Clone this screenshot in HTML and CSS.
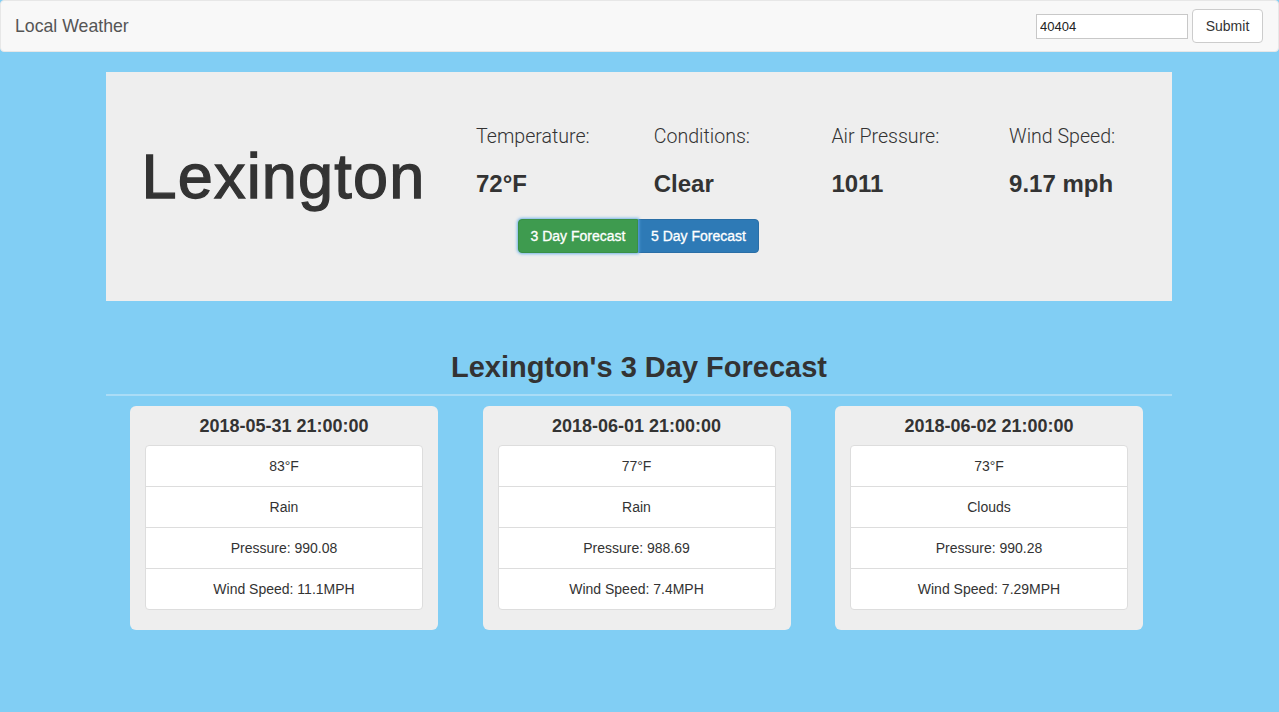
FILE: index.html
```html
<!DOCTYPE html>
<html>
<head>
<meta charset="utf-8">
<title>Local Weather</title>
<link rel="stylesheet" href="styles.css">
</head>
<body>
<nav class="navbar">
  <span class="brand">Local Weather</span>
  <form class="search">
    <input class="zip" type="text" value="40404">
    <button class="btn btn-default" type="button">Submit</button>
  </form>
</nav>
<main class="page">
  <section class="jumbotron">
    <div class="city-col">
      <h1 class="city">Lexington</h1>
    </div>
    <div class="info-col">
      <div class="stats">
        <div class="stat"><div class="label">Temperature:</div><div class="value">72°F</div></div>
        <div class="stat"><div class="label">Conditions:</div><div class="value">Clear</div></div>
        <div class="stat"><div class="label">Air Pressure:</div><div class="value">1011</div></div>
        <div class="stat"><div class="label">Wind Speed:</div><div class="value">9.17 mph</div></div>
      </div>
      <div class="btn-group">
        <button class="btn btn-success active" type="button">3 Day Forecast</button>
        <button class="btn btn-primary" type="button">5 Day Forecast</button>
      </div>
    </div>
  </section>
  <section class="forecast">
    <h2 class="forecast-title">Lexington's 3 Day Forecast</h2>
    <div class="cards">
      <div class="card">
        <h3 class="card-title">2018-05-31 21:00:00</h3>
        <ul class="list-group">
          <li class="list-item">83°F</li>
          <li class="list-item">Rain</li>
          <li class="list-item">Pressure: 990.08</li>
          <li class="list-item">Wind Speed: 11.1MPH</li>
        </ul>
      </div>
      <div class="card">
        <h3 class="card-title">2018-06-01 21:00:00</h3>
        <ul class="list-group">
          <li class="list-item">77°F</li>
          <li class="list-item">Rain</li>
          <li class="list-item">Pressure: 988.69</li>
          <li class="list-item">Wind Speed: 7.4MPH</li>
        </ul>
      </div>
      <div class="card">
        <h3 class="card-title">2018-06-02 21:00:00</h3>
        <ul class="list-group">
          <li class="list-item">73°F</li>
          <li class="list-item">Clouds</li>
          <li class="list-item">Pressure: 990.28</li>
          <li class="list-item">Wind Speed: 7.29MPH</li>
        </ul>
      </div>
    </div>
  </section>
</main>
</body>
</html>
```
FILE: styles.css
```css
* { box-sizing: border-box; }
html, body { margin: 0; padding: 0; }
body {
  background: #81cef4;
  font-family: "Liberation Sans", Arial, sans-serif;
  font-size: 14px;
  line-height: 20px;
  color: #333;
  min-height: 712px;
}
.navbar {
  height: 52px;
  background: #f8f8f8;
  border: 1px solid #e7e7e7;
  border-radius: 4px;
  display: flex;
  align-items: center;
  justify-content: space-between;
  padding: 0 15px 0 14px;
  margin-bottom: 20px;
}
.brand {
  font-size: 17.7px;
  line-height: 20px;
  color: #555;
}
.search {
  display: flex;
  align-items: center;
  gap: 4px;
  margin: 0;
}
.zip {
  width: 152px;
  height: 25px;
  border: 1px solid #c8c8c8;
  padding: 0 3px;
  font-family: "Liberation Sans", Arial, sans-serif;
  font-size: 13px;
  color: #222;
  background: #fff;
}
.btn {
  font-family: "Liberation Sans", Arial, sans-serif;
  font-size: 14px;
  line-height: 20px;
  padding: 6px 12px;
  border: 1px solid transparent;
  border-radius: 4px;
  cursor: pointer;
}
.btn-default {
  background: #fff;
  border-color: #ccc;
  color: #333;
  height: 34px;
  width: 71px;
  padding: 6px 0;
}
.page {
  width: 1066px;
  margin: 0 0 0 106px;
}
.jumbotron {
  background: #eee;
  height: 229px;
  display: flex;
}
.city-col {
  width: 355px;
  flex: none;
  text-align: center;
  padding-top: 73px;
}
.city {
  margin: 0;
  font-size: 63px;
  line-height: 63px;
  font-weight: 400;
  letter-spacing: 1.2px;
  -webkit-text-stroke: 1.3px #333;
  color: #333;
}
.info-col {
  flex: 1;
  padding-top: 53px;
}
.stats {
  display: flex;
}
.stat {
  width: 177.7px;
  padding: 0 15px;
}
.label {
  font-family: Roboto, "Liberation Sans", sans-serif;
  font-weight: 300;
  font-size: 19.6px;
  line-height: 24px;
  color: #333;
}
.value {
  margin-top: 21px;
  font-size: 24px;
  line-height: 28px;
  font-weight: 700;
}
.btn-group {
  display: flex;
  margin: 21px 0 0 57px;
}
.btn-group .btn {
  color: #fff;
  height: 34px;
  font-size: 14px;
  -webkit-text-stroke: 0.3px #fff;
}
.btn-success {
  background: #3e9b4f;
  border-color: #3a8f46;
  border-radius: 4px 0 0 4px;
  box-shadow: 0 0 3px 1px rgba(102, 175, 233, 0.9);
  width: 120px;
  padding: 6px 0;
  position: relative;
  z-index: 1;
}
.btn-primary {
  background: #2e7ab6;
  border-color: #2a6ea6;
  border-radius: 0 4px 4px 0;
  width: 121px;
  padding: 6px 0;
}
.forecast {
  padding-top: 50px;
}
.forecast-title {
  margin: 0;
  text-align: center;
  font-size: 29px;
  line-height: 33px;
  font-weight: 700;
  padding-bottom: 10px;
  border-bottom: 2px solid #aadcf6;
}
.cards {
  display: flex;
  gap: 44.5px;
  padding-left: 24px;
  margin-top: 10px;
}
.card {
  width: 308px;
  background: #eee;
  border-radius: 6px;
  padding: 10px 15px 20px;
}
.card-title {
  margin: 0 0 9px;
  text-align: center;
  font-size: 18px;
  line-height: 20px;
  font-weight: 700;
}
.list-group {
  list-style: none;
  margin: 0;
  padding: 0;
}
.list-item {
  background: #fff;
  border: 1px solid #ddd;
  margin-bottom: -1px;
  padding: 10px 15px;
  text-align: center;
  font-size: 14px;
  line-height: 20px;
}
.list-item:first-child { border-radius: 4px 4px 0 0; }
.list-item:last-child { border-radius: 0 0 4px 4px; margin-bottom: 0; }
```
